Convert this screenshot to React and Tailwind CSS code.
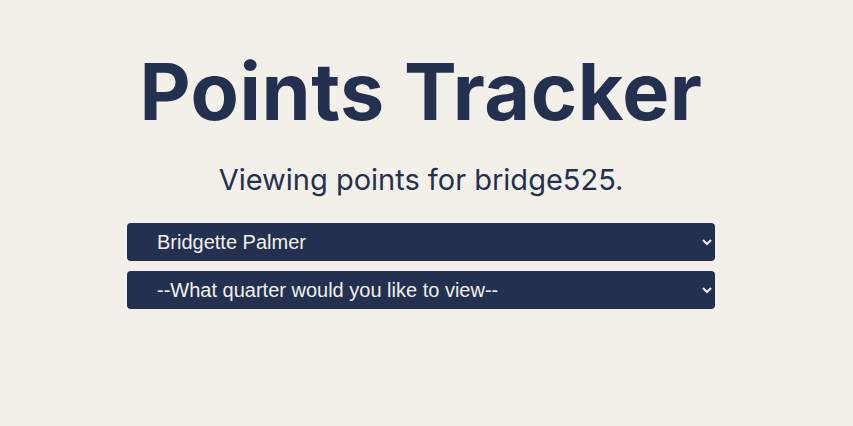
import React from "react";

function App() {
  return (
    <div className="min-h-screen bg-[#f3f0ea] pr-[11px] text-[#23304f]" style={{ fontFamily: "Inter, 'Noto Sans', sans-serif" }}>
      <div className="flex flex-col items-center pt-[44px]">
        {/* HEADER */}
        <h1 className="text-[79px] font-bold leading-[94px] tracking-[0.5px]">Points Tracker</h1>
        <p className="mt-[22px] text-[29px] leading-[40px]">Viewing points for bridge525.</p>

        {/* SELECTS */}
        <div className="mt-[23px] flex w-[588px] flex-col gap-[10px]" style={{ fontFamily: "'Liberation Sans', Arial, sans-serif" }}>
          <select className="h-[38px] w-full rounded-[4px] bg-[#23304f] pl-[26px] pr-[6px] text-[20px] text-[#f3f0ea] outline-none" defaultValue="bp">
            <option value="bp">Bridgette Palmer</option>
          </select>
          <select className="h-[38px] w-full rounded-[4px] bg-[#23304f] pl-[26px] pr-[6px] text-[20px] text-[#f3f0ea] outline-none" defaultValue="">
            <option value="">--What quarter would you like to view--</option>
            <option value="q1">Quarter 1</option>
            <option value="q2">Quarter 2</option>
            <option value="q3">Quarter 3</option>
            <option value="q4">Quarter 4</option>
          </select>
        </div>
      </div>
    </div>
  );
}

export default App;
